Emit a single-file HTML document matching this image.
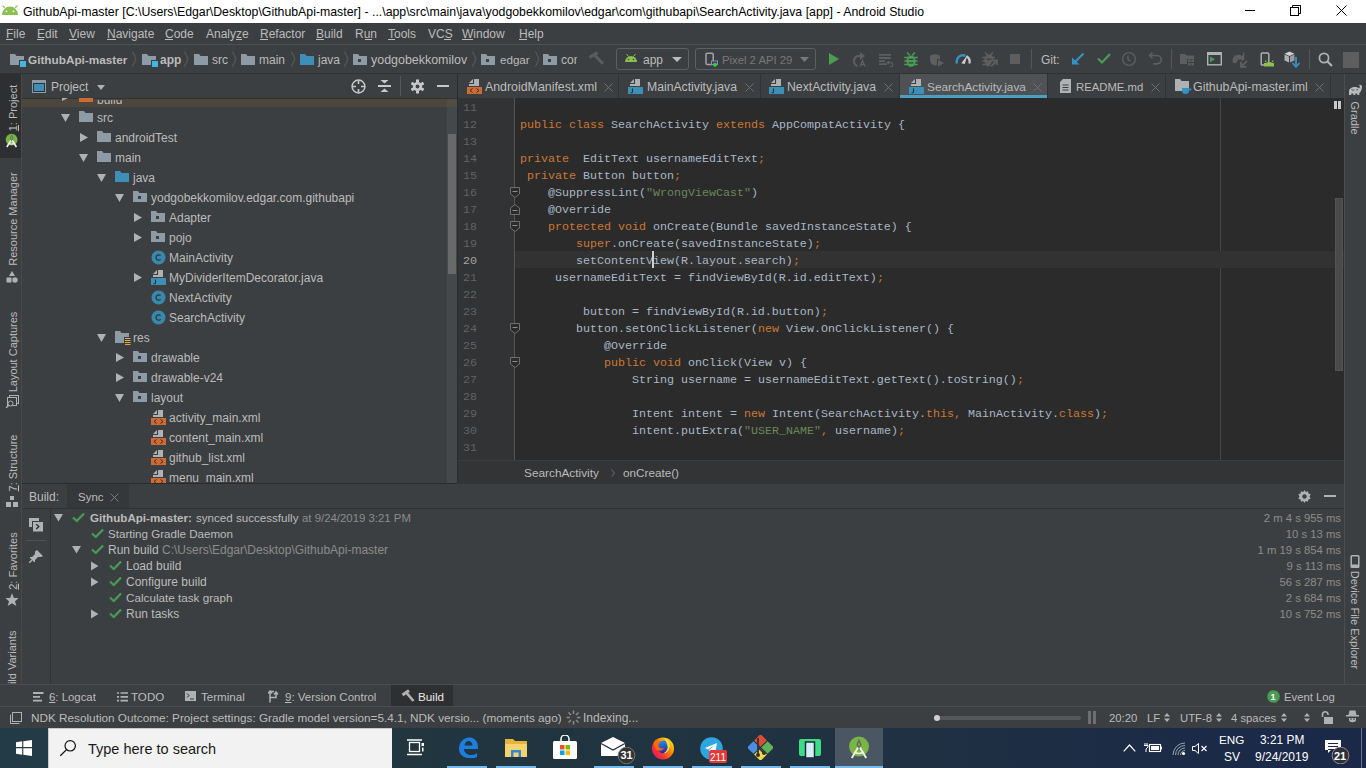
<!DOCTYPE html>
<html><head><meta charset="utf-8"><style>
html,body{margin:0;padding:0;width:1366px;height:768px;overflow:hidden;background:#3c3f41;position:relative;font-family:"Liberation Sans", sans-serif;}
body>div,body>svg{position:absolute;}
.t{white-space:pre;line-height:20px;}
</style></head><body>
<div style="left:0px;top:0px;width:1366px;height:23px;background:#ffffff;"></div>
<svg style="left:2px;top:5px" width="16" height="10" viewBox="0 0 16 10"><path d="M0 10 A8 8.5 0 0 1 16 10 Z" fill="#8cc152"/><line x1="0.6" y1="0.6" x2="2.8" y2="2.8" stroke="#8cc152" stroke-width="1.3"/><line x1="15.4" y1="0.6" x2="13.2" y2="2.8" stroke="#8cc152" stroke-width="1.3"/><circle cx="4.5" cy="6.3" r="0.9" fill="#fff"/><circle cx="11.5" cy="6.3" r="0.9" fill="#fff"/></svg>
<div class="t" style="left:23px;top:2px;font-size:12.32px;color:#000000;">GithubApi-master [C:\Users\Edgar\Desktop\GithubApi-master] - ...\app\src\main\java\yodgobekkomilov\edgar\com\githubapi\SearchActivity.java [app] - Android Studio</div>
<div style="left:1245px;top:10px;width:10px;height:1px;background:#000;"></div>
<svg style="left:1290px;top:5px" width="11" height="11" viewBox="0 0 11 11"><rect x="0.5" y="2.5" width="8" height="8" fill="none" stroke="#000"/><path d="M2.5 2.5 V0.5 H10.5 V8.5 H8.5" fill="none" stroke="#000"/></svg>
<svg style="left:1336px;top:5px" width="11" height="11" viewBox="0 0 11 11"><path d="M0.5 0.5 L10.5 10.5 M10.5 0.5 L0.5 10.5" stroke="#000" stroke-width="1"/></svg>
<div style="left:0px;top:23px;width:1366px;height:21px;background:#3c3f41;"></div>
<div style="left:0px;top:44px;width:1366px;height:1px;background:#515151;"></div>
<div class="t" style="left:6px;top:24px;font-size:12px;color:#bbbbbb;">File</div>
<div class="t" style="left:37px;top:24px;font-size:12px;color:#bbbbbb;">Edit</div>
<div class="t" style="left:69px;top:24px;font-size:12px;color:#bbbbbb;">View</div>
<div class="t" style="left:107px;top:24px;font-size:12px;color:#bbbbbb;">Navigate</div>
<div class="t" style="left:165px;top:24px;font-size:12px;color:#bbbbbb;">Code</div>
<div class="t" style="left:206px;top:24px;font-size:12px;color:#bbbbbb;">Analyze</div>
<div class="t" style="left:260px;top:24px;font-size:12px;color:#bbbbbb;">Refactor</div>
<div class="t" style="left:316px;top:24px;font-size:12px;color:#bbbbbb;">Build</div>
<div class="t" style="left:355px;top:24px;font-size:12px;color:#bbbbbb;">Run</div>
<div class="t" style="left:388px;top:24px;font-size:12px;color:#bbbbbb;">Tools</div>
<div class="t" style="left:428px;top:24px;font-size:12px;color:#bbbbbb;">VCS</div>
<div class="t" style="left:462px;top:24px;font-size:12px;color:#bbbbbb;">Window</div>
<div class="t" style="left:519px;top:24px;font-size:12px;color:#bbbbbb;">Help</div>
<div style="left:6px;top:39px;width:7px;height:1px;background:#bbbbbb;"></div>
<div style="left:37px;top:39px;width:7px;height:1px;background:#bbbbbb;"></div>
<div style="left:69px;top:39px;width:8px;height:1px;background:#bbbbbb;"></div>
<div style="left:107px;top:39px;width:9px;height:1px;background:#bbbbbb;"></div>
<div style="left:165px;top:39px;width:8px;height:1px;background:#bbbbbb;"></div>
<div style="left:236px;top:39px;width:6px;height:1px;background:#bbbbbb;"></div>
<div style="left:260px;top:39px;width:8px;height:1px;background:#bbbbbb;"></div>
<div style="left:316px;top:39px;width:8px;height:1px;background:#bbbbbb;"></div>
<div style="left:365px;top:39px;width:7px;height:1px;background:#bbbbbb;"></div>
<div style="left:388px;top:39px;width:7px;height:1px;background:#bbbbbb;"></div>
<div style="left:444px;top:39px;width:7px;height:1px;background:#bbbbbb;"></div>
<div style="left:462px;top:39px;width:11px;height:1px;background:#bbbbbb;"></div>
<div style="left:519px;top:39px;width:8px;height:1px;background:#bbbbbb;"></div>
<div style="left:0px;top:45px;width:1366px;height:28px;background:#3c3f41;"></div>
<div style="left:0px;top:73px;width:1366px;height:1px;background:#323232;"></div>
<svg style="left:10px;top:54px" width="17" height="15" viewBox="0 0 17 15"><path d="M0 0 H5 L6.5 2 H14 V6 H9 V11 H0 Z" fill="#8f9ba4"/><rect x="10" y="7" width="6" height="6" fill="#40b6e0"/></svg>
<div class="t" style="left:28px;top:50px;font-size:11.78px;color:#bbbbbb;font-weight:bold;">GithubApi-master</div>
<svg style="left:132px;top:51px" width="5" height="16" viewBox="0 0 5 16"><path d="M0.5 0.5 L4 8 L0.5 15.5" fill="none" stroke="#5c5f61" stroke-width="1"/></svg>
<svg style="left:142px;top:54px" width="17" height="15" viewBox="0 0 17 15"><path d="M0 0 H5 L6.5 2 H14 V6 H9 V11 H0 Z" fill="#8f9ba4"/><rect x="10" y="7" width="6" height="6" fill="#40b6e0"/></svg>
<div class="t" style="left:160px;top:50px;font-size:12px;color:#bbbbbb;font-weight:bold;">app</div>
<svg style="left:184px;top:51px" width="5" height="16" viewBox="0 0 5 16"><path d="M0.5 0.5 L4 8 L0.5 15.5" fill="none" stroke="#5c5f61" stroke-width="1"/></svg>
<svg style="left:194px;top:54px" width="14" height="11" viewBox="0 0 14 11"><path d="M0 0 H5 L6.5 2 H14 V11 H0 Z" fill="#8f9ba4"/></svg>
<div class="t" style="left:212px;top:50px;font-size:12px;color:#bbbbbb;">src</div>
<svg style="left:232px;top:51px" width="5" height="16" viewBox="0 0 5 16"><path d="M0.5 0.5 L4 8 L0.5 15.5" fill="none" stroke="#5c5f61" stroke-width="1"/></svg>
<svg style="left:241px;top:54px" width="14" height="11" viewBox="0 0 14 11"><path d="M0 0 H5 L6.5 2 H14 V11 H0 Z" fill="#8f9ba4"/></svg>
<div class="t" style="left:259px;top:50px;font-size:12px;color:#bbbbbb;">main</div>
<svg style="left:291px;top:51px" width="5" height="16" viewBox="0 0 5 16"><path d="M0.5 0.5 L4 8 L0.5 15.5" fill="none" stroke="#5c5f61" stroke-width="1"/></svg>
<svg style="left:300px;top:54px" width="14" height="11" viewBox="0 0 14 11"><path d="M0 0 H5 L6.5 2 H14 V11 H0 Z" fill="#3d8fb7"/></svg>
<div class="t" style="left:318px;top:50px;font-size:12px;color:#bbbbbb;">java</div>
<svg style="left:344px;top:51px" width="5" height="16" viewBox="0 0 5 16"><path d="M0.5 0.5 L4 8 L0.5 15.5" fill="none" stroke="#5c5f61" stroke-width="1"/></svg>
<svg style="left:353px;top:54px" width="14" height="11" viewBox="0 0 14 11"><path d="M0 0 H5 L6.5 2 H14 V11 H0 Z" fill="#8f9ba4"/><rect x="5" y="5" width="3" height="3" fill="#3c3f41"/></svg>
<div class="t" style="left:371px;top:50px;font-size:12.45px;color:#bbbbbb;">yodgobekkomilov</div>
<svg style="left:472px;top:51px" width="5" height="16" viewBox="0 0 5 16"><path d="M0.5 0.5 L4 8 L0.5 15.5" fill="none" stroke="#5c5f61" stroke-width="1"/></svg>
<svg style="left:481px;top:54px" width="14" height="11" viewBox="0 0 14 11"><path d="M0 0 H5 L6.5 2 H14 V11 H0 Z" fill="#8f9ba4"/><rect x="5" y="5" width="3" height="3" fill="#3c3f41"/></svg>
<div class="t" style="left:500px;top:50px;font-size:11.6px;color:#bbbbbb;">edgar</div>
<svg style="left:535px;top:51px" width="5" height="16" viewBox="0 0 5 16"><path d="M0.5 0.5 L4 8 L0.5 15.5" fill="none" stroke="#5c5f61" stroke-width="1"/></svg>
<svg style="left:543px;top:54px" width="14" height="11" viewBox="0 0 14 11"><path d="M0 0 H5 L6.5 2 H14 V11 H0 Z" fill="#8f9ba4"/><rect x="5" y="5" width="3" height="3" fill="#3c3f41"/></svg>
<div style="left:561px;top:50px;width:16px;height:20px;overflow:hidden"><div class="t" style="position:absolute;left:0;top:0;font-size:12px;color:#bbbbbb">com</div></div>
<svg style="left:586px;top:50px" width="20" height="18" viewBox="0 0 20 18"><path d="M3.5 7.5 L11.5 2.5" stroke="#5c5c5c" stroke-width="3.2"/><path d="M8.5 5 L17 13.8" stroke="#5c5c5c" stroke-width="3"/></svg>
<div style="left:616px;top:48px;width:73px;height:22px;background:none;border:1px solid #5e6060;border-radius:3px;box-sizing:border-box;background:transparent"></div>
<svg style="left:624px;top:53px" width="14" height="10" viewBox="0 0 14 10"><path d="M1 9 A6 6 0 0 1 13 9 Z" fill="#8cc152"/><line x1="2.5" y1="1" x2="4.5" y2="3.5" stroke="#8cc152"/><line x1="11.5" y1="1" x2="9.5" y2="3.5" stroke="#8cc152"/><circle cx="4.5" cy="6.5" r="0.8" fill="#3c3f41"/><circle cx="9.5" cy="6.5" r="0.8" fill="#3c3f41"/></svg>
<div class="t" style="left:643px;top:50px;font-size:12px;color:#bbbbbb;">app</div>
<svg style="left:672px;top:57px" width="10" height="6" viewBox="0 0 10 6"><path d="M0 0 H10 L5 5 Z" fill="#bbbbbb"/></svg>
<div style="left:695px;top:48px;width:121px;height:22px;background:none;border:1px solid #5e6060;border-radius:3px;box-sizing:border-box;background:transparent"></div>
<svg style="left:705px;top:52px" width="15" height="16" viewBox="0 0 15 16"><rect x="1" y="1.2" width="7.2" height="11.3" rx="1.2" fill="none" stroke="#9fa3a6" stroke-width="1.5"/><rect x="6.5" y="9" width="6" height="3.5" fill="#3c3f41" stroke="#a07ae0" stroke-width="1"/><circle cx="10" cy="12.8" r="2" fill="#22dd22"/></svg>
<div class="t" style="left:722px;top:50px;font-size:11.3px;color:#787878;">Pixel 2 API 29</div>
<svg style="left:800px;top:57px" width="9" height="6" viewBox="0 0 9 6"><path d="M0 0 H9 L4.5 5 Z" fill="#787878"/></svg>
<svg style="left:829px;top:53px" width="10" height="12" viewBox="0 0 10 12"><path d="M0 0 L10 6 L0 12 Z" fill="#4a9d55"/></svg>
<svg style="left:850px;top:51px" width="17" height="17" viewBox="0 0 17 17"><path d="M7.5 15 A5.3 5.3 0 0 1 7.5 5 H10.5" fill="none" stroke="#5e5e5e" stroke-width="2"/><path d="M10 1 L15 5 L10 9 Z" fill="#5e5e5e"/><path d="M10 15.5 L12.5 9.5 L15 15.5 M11 13.5 H14" fill="none" stroke="#5e5e5e" stroke-width="1.3"/></svg>
<svg style="left:879px;top:53px" width="15" height="14" viewBox="0 0 15 14"><path d="M0 1.8 H12 M0 5 H12 M0 8.2 H6 M0 11.2 H8" stroke="#5e5e5e" stroke-width="1.8"/><path d="M9 9.5 H11.5 A2.2 2.2 0 0 1 11.5 13.9 H10.5" fill="none" stroke="#5e5e5e" stroke-width="1.1"/><path d="M10 8 L8.3 9.5 L10 11" fill="none" stroke="#5e5e5e" stroke-width="1.1"/></svg>
<svg style="left:904px;top:52px" width="14" height="15" viewBox="0 0 14 15"><g ><path d="M3.2 0.5 L5.8 3.5 M10.8 0.5 L8.2 3.5" stroke="#4a9d55" stroke-width="1.5"/><ellipse cx="7" cy="9.2" rx="4.6" ry="5.6" fill="#4a9d55"/><path d="M0.3 5.5 H13.7 M0.3 9 H13.7 M0.3 12.5 H13.7" stroke="#4a9d55" stroke-width="1.7"/><path d="M4.6 7.3 H9.4 M4.6 10.8 H9.4" stroke="#3c3f41" stroke-width="1.3"/></g></svg>
<svg style="left:930px;top:54px" width="16" height="14" viewBox="0 0 16 14"><path d="M0 1.5 L5 0 L10 1.5 V6 C10 9.5 7 11 5 11.5 C3 11 0 9.5 0 6 Z" fill="#5e5e5e"/><path d="M7.5 5 L15 9 L7.5 13.5 Z" fill="#5e5e5e" stroke="#3c3f41" stroke-width="1"/></svg>
<svg style="left:955px;top:53px" width="16" height="11" viewBox="0 0 16 11"><path d="M2 10.5 A6.3 6.3 0 0 1 10.5 2.8" fill="none" stroke="#3592c4" stroke-width="2.4"/><path d="M11.5 3.2 A6.3 6.3 0 0 1 14.3 10.5" fill="none" stroke="#c8c8c8" stroke-width="2.2"/><path d="M6.3 10.3 L12.3 2.2 L9.8 11 Z" fill="#d0d0d0"/></svg>
<svg style="left:982px;top:52px" width="16" height="15" viewBox="0 0 16 15"><path d="M3.2 0.5 L5.8 3.5 M10.8 0.5 L8.2 3.5" stroke="#5e5e5e" stroke-width="1.5"/><path d="M2.4 9.2 A4.6 5.6 0 0 1 11.6 7 L7 14.5 A4.6 5.6 0 0 1 2.4 9.2 Z" fill="#5e5e5e"/><path d="M0.3 5.5 H13 M0.3 9 H8 M0.3 12.5 H5" stroke="#5e5e5e" stroke-width="1.7"/><path d="M4.6 7.3 H9.4" stroke="#3c3f41" stroke-width="1.3"/><path d="M9 14.5 L14.5 9" stroke="#5e5e5e" stroke-width="1.8"/><path d="M10.5 8.5 H15 V13" fill="none" stroke="#5e5e5e" stroke-width="1.8"/></svg>
<div style="left:1010px;top:54px;width:10px;height:10px;background:#5e5e5e;"></div>
<div style="left:1031px;top:49px;width:1px;height:20px;background:#555555;"></div>
<div class="t" style="left:1041px;top:50px;font-size:12px;color:#bbbbbb;">Git:</div>
<svg style="left:1070px;top:52px" width="15" height="14" viewBox="0 0 15 14"><path d="M13.5 1.5 L5 10" stroke="#3592c4" stroke-width="2.2"/><path d="M2 5.5 V12.5 H9.5 Z" fill="#3592c4"/></svg>
<svg style="left:1097px;top:52px" width="14" height="13" viewBox="0 0 14 13"><path d="M1 6.5 L5 10.5 L13 2" fill="none" stroke="#499c54" stroke-width="2.2"/></svg>
<svg style="left:1121px;top:51px" width="16" height="16" viewBox="0 0 16 16"><circle cx="8" cy="8" r="6.4" fill="none" stroke="#5e5e5e" stroke-width="1.4"/><path d="M7 4.5 V8.5 L9.5 10" fill="none" stroke="#5e5e5e" stroke-width="1.4"/></svg>
<svg style="left:1148px;top:51px" width="15" height="15" viewBox="0 0 15 15"><path d="M4.5 1.5 L1.5 4.5 L4.5 7.5" fill="none" stroke="#5e5e5e" stroke-width="1.5"/><path d="M1.8 4.5 H9 A4.2 4.2 0 0 1 9 12.9 H5" fill="none" stroke="#5e5e5e" stroke-width="1.6"/></svg>
<div style="left:1171px;top:49px;width:1px;height:20px;background:#555555;"></div>
<svg style="left:1180px;top:53px" width="16" height="14" viewBox="0 0 16 14"><path d="M0 1 H5 L6.5 2.5 H14 V6 H7 V11 H0 Z" fill="#5e5e5e"/><rect x="8" y="6.5" width="2.6" height="2.6" fill="#5e5e5e"/><rect x="11.4" y="6.5" width="2.6" height="2.6" fill="#5e5e5e"/><rect x="8" y="10" width="2.6" height="2.6" fill="#5e5e5e"/><rect x="11.4" y="10" width="2.6" height="2.6" fill="#5e5e5e"/></svg>
<svg style="left:1207px;top:52px" width="15" height="14" viewBox="0 0 15 14"><rect x="0.7" y="0.7" width="13.6" height="12.1" fill="none" stroke="#afb1b3" stroke-width="1.4"/><rect x="0.7" y="0.7" width="13.6" height="2.3" fill="#afb1b3"/><path d="M3 4.5 L8 7.3 L3 10.2 Z" fill="#499c54"/></svg>
<svg style="left:1232px;top:51px" width="17" height="17" viewBox="0 0 17 17"><path d="M1 12 C0 8 1 5 4.5 4 C7 3.3 9 4 10 5 C11 4 11.5 2.5 11 1 C12.5 1.5 13 3.5 12 5.5 C13 7 12.5 9 11 10 L9 8.5 H6 L4.5 12 Z" fill="#5e5e5e"/><path d="M9.5 15.5 L15 10" stroke="#5e5e5e" stroke-width="1.8"/><path d="M9 10.5 V15.8 H14.5" fill="none" stroke="#5e5e5e" stroke-width="1.8"/></svg>
<svg style="left:1260px;top:52px" width="15" height="15" viewBox="0 0 15 15"><rect x="1.2" y="1" width="7.6" height="12" rx="1" fill="none" stroke="#afb1b3" stroke-width="1.4"/><path d="M4.5 14.5 A4.8 4.8 0 0 1 14 14.5 Z" fill="#8cc152" transform="translate(0,-0.5)"/><path d="M5.2 8.6 L6.3 9.8 M13.3 8.6 L12.2 9.8" stroke="#8cc152" stroke-width="1.2"/><rect x="4" y="11" width="10" height="3.5" fill="#8cc152"/></svg>
<svg style="left:1284px;top:51px" width="17" height="17" viewBox="0 0 17 17"><path d="M5.5 0.5 L10.5 2.8 L5.5 5 L0.5 2.8 Z" fill="#d0d0d0"/><path d="M0.5 3.5 L5 5.5 V11.5 L0.5 9.5 Z" fill="#afb1b3"/><path d="M6 5.5 L10.5 3.5 V9.5 L6 11.5 Z" fill="#9a9c9e"/><path d="M12 6 V15" stroke="#3592c4" stroke-width="1.8"/><path d="M8.5 12 L12 15.8 L15.5 12" fill="none" stroke="#3592c4" stroke-width="1.8"/></svg>
<div style="left:1309px;top:49px;width:1px;height:20px;background:#555555;"></div>
<svg style="left:1318px;top:52px" width="15" height="15" viewBox="0 0 15 15"><circle cx="6" cy="6" r="4.6" fill="none" stroke="#afb1b3" stroke-width="1.8"/><path d="M9.5 9.5 L14 14" stroke="#afb1b3" stroke-width="2.2"/></svg>
<div style="left:1343px;top:52px;width:16px;height:16px;background:#5e5e5e;"></div>
<div style="left:0px;top:74px;width:21px;height:612px;background:#3c3f41;"></div>
<div style="left:0px;top:74px;width:21px;height:84px;background:#2d2f30;"></div>
<div style="left:21px;top:74px;width:1px;height:612px;background:#47494b;"></div>
<div class="t" style="left:-87.5px;top:97.8px;width:200px;text-align:center;font-size:11px;color:#bbbbbb;transform:rotate(-90deg)"><u>1</u>: Project</div>
<svg style="left:4px;top:132px" width="16" height="16" viewBox="0 0 16 16"><circle cx="7.6" cy="7.7" r="5.9" fill="#78b543"/><path d="M7.6 3 L8.9 6.3 L7.6 8.8 L6.3 6.3 Z" fill="none" stroke="#6a6a6a" stroke-width="1"/><path d="M6.9 8.5 L2.8 15 M8.3 8.5 L12.4 15" stroke="#f0f0f0" stroke-width="1.6"/><path d="M4.8 11.2 Q7.6 12.8 10.4 11.2" fill="none" stroke="#f0f0f0" stroke-width="1.1"/></svg>
<div class="t" style="left:-87.5px;top:208.8px;width:200px;text-align:center;font-size:11px;color:#bbbbbb;transform:rotate(-90deg)">Resource Manager</div>
<svg style="left:6px;top:271px" width="12" height="12" viewBox="0 0 12 12"><path d="M6 0 L9 5 H3 Z" fill="#afb1b3"/><rect x="0.5" y="6.5" width="5" height="5" fill="#afb1b3"/><circle cx="9" cy="9" r="2.7" fill="#afb1b3"/></svg>
<div class="t" style="left:-87.5px;top:342.29999999999995px;width:200px;text-align:center;font-size:11px;color:#bbbbbb;transform:rotate(-90deg)">Layout Captures</div>
<svg style="left:5px;top:395px" width="14" height="13" viewBox="0 0 14 13"><rect x="4.5" y="0.5" width="9" height="8" fill="none" stroke="#afb1b3"/><rect x="2.5" y="2.5" width="9" height="8" fill="#3c3f41" stroke="#afb1b3"/><circle cx="5.5" cy="8.5" r="2.5" fill="#3c3f41" stroke="#afb1b3"/><path d="M3.5 10.5 L1 13" stroke="#afb1b3" stroke-width="1.3"/></svg>
<div class="t" style="left:-87.5px;top:453.3px;width:200px;text-align:center;font-size:11px;color:#bbbbbb;transform:rotate(-90deg)"><u>7</u>: Structure</div>
<svg style="left:6px;top:496px" width="12" height="11" viewBox="0 0 12 11"><rect x="4" y="0" width="4" height="4" fill="#afb1b3"/><rect x="0" y="6" width="5" height="5" fill="#afb1b3"/><rect x="7" y="6" width="5" height="5" fill="#afb1b3"/></svg>
<div class="t" style="left:-87.5px;top:550.55px;width:200px;text-align:center;font-size:11px;color:#bbbbbb;transform:rotate(-90deg)"><u>2</u>: Favorites</div>
<svg style="left:5px;top:593px" width="14" height="13" viewBox="0 0 14 13"><path d="M7 0.3 L8.9 4.9 L13.7 5.1 L10 8.2 L11.3 12.9 L7 10.2 L2.7 12.9 L4 8.2 L0.3 5.1 L5.1 4.9 Z" fill="#afb1b3"/></svg>
<div style="left:0;top:600px;width:21px;height:84px;overflow:hidden"><div class="t" style="position:absolute;left:-88px;top:54px;width:200px;text-align:center;font-size:11px;color:#bbbbbb;transform:rotate(-90deg)">Build Variants</div></div>
<div style="left:1345px;top:74px;width:21px;height:612px;background:#3c3f41;"></div>
<div style="left:1344px;top:74px;width:1px;height:612px;background:#4b4d4f;"></div>
<svg style="left:1348px;top:84px" width="15" height="12" viewBox="0 0 15 12"><path d="M1 11 V7.5 C1 4.5 3.5 3 7 3 C9 3 10 3.5 10.8 4.5 C11.6 3.8 12.2 2.8 11.8 2 C11.4 1.4 10.8 1.4 10.5 1.8 C11 0.3 14 0.3 14 3 C14 5.5 12.8 7.8 11.3 9 V11 H9.3 V9.5 H7.3 V11 H5.3 V9.5 H3.3 V11 Z" fill="#b8babc"/><circle cx="9.2" cy="5.8" r="0.7" fill="#3c3f41"/><path d="M3.5 5.5 Q5 7 6.5 5.8" fill="none" stroke="#3c3f41" stroke-width="0.8"/></svg>
<div class="t" style="left:1254.5px;top:108.19999999999999px;width:200px;text-align:center;font-size:11px;color:#bbbbbb;transform:rotate(90deg)">Gradle</div>
<svg style="left:1350px;top:555px" width="10" height="13" viewBox="0 0 10 13"><rect x="1.2" y="0.8" width="7.6" height="11.4" rx="0.8" fill="none" stroke="#afb1b3" stroke-width="1.5"/><rect x="1" y="9.5" width="8" height="2.5" fill="#afb1b3"/></svg>
<div class="t" style="left:1254.5px;top:609.7px;width:200px;text-align:center;font-size:11px;color:#bbbbbb;transform:rotate(90deg)">Device File Explorer</div>
<div style="left:22px;top:74px;width:435px;height:24px;background:#3c3f41;"></div>
<div style="left:22px;top:98px;width:435px;height:1px;background:#323232;"></div>
<svg style="left:32px;top:80px" width="14" height="13" viewBox="0 0 14 13"><rect x="0" y="0" width="14" height="13" fill="#8f9ba4"/><rect x="1" y="3" width="12" height="9" fill="#2f3133"/><rect x="2" y="4" width="10" height="7" fill="#3d8fb7"/></svg>
<div class="t" style="left:51px;top:77px;font-size:12px;color:#bbbbbb;">Project</div>
<svg style="left:97px;top:85px" width="8" height="5" viewBox="0 0 8 5"><path d="M0 0 H8 L4 5 Z" fill="#afb1b3"/></svg>
<svg style="left:351px;top:79px" width="15" height="15" viewBox="0 0 15 15"><circle cx="7.5" cy="7.5" r="6.4" fill="none" stroke="#c8c8c8" stroke-width="1.5"/><path d="M7.5 1.5 V5 M7.5 10 V13.5 M1.5 7.5 H5 M10 7.5 H13.5" stroke="#c8c8c8" stroke-width="1.6"/></svg>
<svg style="left:378px;top:79px" width="13" height="14" viewBox="0 0 13 14"><path d="M2.5 1 H10.5 L6.5 4.5 Z M2.5 13 H10.5 L6.5 9.5 Z" fill="#c8c8c8"/><rect x="0" y="6" width="13" height="2" fill="#c8c8c8"/></svg>
<div style="left:400px;top:76px;width:1px;height:20px;background:#555759;"></div>
<svg style="left:411px;top:79px" width="13" height="15" viewBox="0 0 13 15"><g fill="#c8c8c8"><circle cx="6.5" cy="7.5" r="4.6"/><rect x="5" y="0.5" width="3" height="3"/><rect x="5" y="11.5" width="3" height="3"/><rect x="5" y="0.5" width="3" height="3" transform="rotate(60 6.5 7.5)"/><rect x="5" y="11.5" width="3" height="3" transform="rotate(60 6.5 7.5)"/><rect x="5" y="0.5" width="3" height="3" transform="rotate(-60 6.5 7.5)"/><rect x="5" y="11.5" width="3" height="3" transform="rotate(-60 6.5 7.5)"/></g><circle cx="6.5" cy="7.5" r="1.9" fill="#3c3f41"/></svg>
<div style="left:437px;top:85px;width:12px;height:2px;background:#c8c8c8;"></div>
<div style="left:22px;top:99px;width:435px;height:384px;background:#3c3f41;"></div>
<div style="left:22px;top:99px;width:435px;height:8px;background:#4b473c;"></div>
<svg style="left:79px;top:98px" width="15" height="5" viewBox="0 0 15 5"><rect x="0" y="0" width="14" height="4" fill="#cc6b34"/></svg>
<div class="t" style="left:97px;top:90px;font-size:12px;color:#bbbbbb;clip-path:inset(10px 0 0 0)">build</div>
<svg style="left:62px;top:98px" width="8" height="4" viewBox="0 0 8 4"><path d="M0 0 L6 0 L0 3 Z" fill="#afb1b3"/></svg>
<div style="left:447px;top:107px;width:10px;height:376px;background:#45484a;"></div>
<div style="left:447px;top:99px;width:10px;height:8px;background:#524d44;"></div>
<div style="left:448px;top:134px;width:8px;height:140px;background:#67696a;"></div>
<svg style="left:61px;top:114px" width="9" height="8" viewBox="0 0 9 8"><path d="M0 0 H9 L4.5 8 Z" fill="#afb1b3"/></svg>
<svg style="left:79px;top:111px" width="14" height="11" viewBox="0 0 14 11"><path d="M0 0 H5 L6.5 2 H14 V11 H0 Z" fill="#8f9ba4"/></svg>
<div class="t" style="left:97px;top:108px;font-size:12px;color:#bbbbbb;">src</div>
<svg style="left:80px;top:133px" width="8" height="9" viewBox="0 0 8 9"><path d="M0 0 L8 4.5 L0 9 Z" fill="#afb1b3"/></svg>
<svg style="left:97px;top:131px" width="14" height="11" viewBox="0 0 14 11"><path d="M0 0 H5 L6.5 2 H14 V11 H0 Z" fill="#8f9ba4"/></svg>
<div class="t" style="left:115px;top:128px;font-size:12px;color:#bbbbbb;">androidTest</div>
<svg style="left:79px;top:154px" width="9" height="8" viewBox="0 0 9 8"><path d="M0 0 H9 L4.5 8 Z" fill="#afb1b3"/></svg>
<svg style="left:97px;top:151px" width="14" height="11" viewBox="0 0 14 11"><path d="M0 0 H5 L6.5 2 H14 V11 H0 Z" fill="#8f9ba4"/></svg>
<div class="t" style="left:115px;top:148px;font-size:12px;color:#bbbbbb;">main</div>
<svg style="left:97px;top:174px" width="9" height="8" viewBox="0 0 9 8"><path d="M0 0 H9 L4.5 8 Z" fill="#afb1b3"/></svg>
<svg style="left:115px;top:171px" width="14" height="11" viewBox="0 0 14 11"><path d="M0 0 H5 L6.5 2 H14 V11 H0 Z" fill="#3d8fb7"/></svg>
<div class="t" style="left:133px;top:168px;font-size:12px;color:#bbbbbb;">java</div>
<svg style="left:115px;top:194px" width="9" height="8" viewBox="0 0 9 8"><path d="M0 0 H9 L4.5 8 Z" fill="#afb1b3"/></svg>
<svg style="left:133px;top:191px" width="14" height="11" viewBox="0 0 14 11"><path d="M0 0 H5 L6.5 2 H14 V11 H0 Z" fill="#8f9ba4"/><rect x="5" y="5" width="3" height="3" fill="#3c3f41"/></svg>
<div class="t" style="left:151px;top:188px;font-size:12px;color:#bbbbbb;">yodgobekkomilov.edgar.com.githubapi</div>
<svg style="left:134px;top:213px" width="8" height="9" viewBox="0 0 8 9"><path d="M0 0 L8 4.5 L0 9 Z" fill="#afb1b3"/></svg>
<svg style="left:151px;top:211px" width="14" height="11" viewBox="0 0 14 11"><path d="M0 0 H5 L6.5 2 H14 V11 H0 Z" fill="#8f9ba4"/><rect x="5" y="5" width="3" height="3" fill="#3c3f41"/></svg>
<div class="t" style="left:169px;top:208px;font-size:12px;color:#bbbbbb;">Adapter</div>
<svg style="left:134px;top:233px" width="8" height="9" viewBox="0 0 8 9"><path d="M0 0 L8 4.5 L0 9 Z" fill="#afb1b3"/></svg>
<svg style="left:151px;top:231px" width="14" height="11" viewBox="0 0 14 11"><path d="M0 0 H5 L6.5 2 H14 V11 H0 Z" fill="#8f9ba4"/><rect x="5" y="5" width="3" height="3" fill="#3c3f41"/></svg>
<div class="t" style="left:169px;top:228px;font-size:12px;color:#bbbbbb;">pojo</div>
<svg style="left:151px;top:250px" width="15" height="15" viewBox="0 0 15 15"><circle cx="7.5" cy="7.5" r="7" fill="#3b87a9"/><path d="M9.6 5.6 A2.7 2.7 0 1 0 9.6 9.4" fill="none" stroke="#223642" stroke-width="1.2"/></svg>
<div class="t" style="left:169px;top:248px;font-size:12px;color:#bbbbbb;">MainActivity</div>
<svg style="left:134px;top:273px" width="8" height="9" viewBox="0 0 8 9"><path d="M0 0 L8 4.5 L0 9 Z" fill="#afb1b3"/></svg>
<svg style="left:151px;top:270px" width="15" height="15" viewBox="0 0 15 15"><path d="M6 0 H12 V7 H2 V4 Z" fill="#afb1b3"/><path d="M6.5 0 V4.5 H2" fill="none" stroke="#3c3f41" stroke-width="1.1"/><rect x="0" y="8" width="15" height="7" fill="#3d8fb7"/><path d="M4.5 9.5 V13 Q4.5 13.8 3.5 13.8 H2.5" stroke="#1f3440" stroke-width="1.1" fill="none"/></svg>
<div class="t" style="left:169px;top:268px;font-size:12px;color:#bbbbbb;">MyDividerItemDecorator.java</div>
<svg style="left:151px;top:290px" width="15" height="15" viewBox="0 0 15 15"><circle cx="7.5" cy="7.5" r="7" fill="#3b87a9"/><path d="M9.6 5.6 A2.7 2.7 0 1 0 9.6 9.4" fill="none" stroke="#223642" stroke-width="1.2"/></svg>
<div class="t" style="left:169px;top:288px;font-size:12px;color:#bbbbbb;">NextActivity</div>
<svg style="left:151px;top:310px" width="15" height="15" viewBox="0 0 15 15"><circle cx="7.5" cy="7.5" r="7" fill="#3b87a9"/><path d="M9.6 5.6 A2.7 2.7 0 1 0 9.6 9.4" fill="none" stroke="#223642" stroke-width="1.2"/></svg>
<div class="t" style="left:169px;top:308px;font-size:12px;color:#bbbbbb;">SearchActivity</div>
<svg style="left:97px;top:334px" width="9" height="8" viewBox="0 0 9 8"><path d="M0 0 H9 L4.5 8 Z" fill="#afb1b3"/></svg>
<svg style="left:115px;top:330px" width="16" height="15" viewBox="0 0 16 15"><path d="M0 1 H5 L6.5 3 H14 V7 H9 V13 H0 Z" fill="#8f9ba4"/><path d="M10 8.5 H15.5 M10 10.5 H15.5 M10 12.5 H15.5 M10 14.5 H15.5" stroke="#e0a83a" stroke-width="1"/></svg>
<div class="t" style="left:133px;top:328px;font-size:12px;color:#bbbbbb;">res</div>
<svg style="left:116px;top:353px" width="8" height="9" viewBox="0 0 8 9"><path d="M0 0 L8 4.5 L0 9 Z" fill="#afb1b3"/></svg>
<svg style="left:133px;top:351px" width="14" height="11" viewBox="0 0 14 11"><path d="M0 0 H5 L6.5 2 H14 V11 H0 Z" fill="#8f9ba4"/><rect x="5" y="5" width="3" height="3" fill="#3c3f41"/></svg>
<div class="t" style="left:151px;top:348px;font-size:12px;color:#bbbbbb;">drawable</div>
<svg style="left:116px;top:373px" width="8" height="9" viewBox="0 0 8 9"><path d="M0 0 L8 4.5 L0 9 Z" fill="#afb1b3"/></svg>
<svg style="left:133px;top:371px" width="14" height="11" viewBox="0 0 14 11"><path d="M0 0 H5 L6.5 2 H14 V11 H0 Z" fill="#8f9ba4"/><rect x="5" y="5" width="3" height="3" fill="#3c3f41"/></svg>
<div class="t" style="left:151px;top:368px;font-size:12px;color:#bbbbbb;">drawable-v24</div>
<svg style="left:115px;top:394px" width="9" height="8" viewBox="0 0 9 8"><path d="M0 0 H9 L4.5 8 Z" fill="#afb1b3"/></svg>
<svg style="left:133px;top:391px" width="14" height="11" viewBox="0 0 14 11"><path d="M0 0 H5 L6.5 2 H14 V11 H0 Z" fill="#8f9ba4"/><rect x="5" y="5" width="3" height="3" fill="#3c3f41"/></svg>
<div class="t" style="left:151px;top:388px;font-size:12px;color:#bbbbbb;">layout</div>
<svg style="left:151px;top:410px" width="15" height="15" viewBox="0 0 15 15"><path d="M6 0 H12 V7 H2 V4 Z" fill="#afb1b3"/><path d="M6.5 0 V4.5 H2" fill="none" stroke="#3c3f41" stroke-width="1.1"/><rect x="0" y="8" width="15" height="7" fill="#cc6b34"/><path d="M5.5 9.5 L3 11.5 L5.5 13.5 M9.5 9.5 L12 11.5 L9.5 13.5" fill="none" stroke="#3c2a20" stroke-width="1"/></svg>
<div class="t" style="left:169px;top:408px;font-size:12px;color:#bbbbbb;">activity_main.xml</div>
<svg style="left:151px;top:430px" width="15" height="15" viewBox="0 0 15 15"><path d="M6 0 H12 V7 H2 V4 Z" fill="#afb1b3"/><path d="M6.5 0 V4.5 H2" fill="none" stroke="#3c3f41" stroke-width="1.1"/><rect x="0" y="8" width="15" height="7" fill="#cc6b34"/><path d="M5.5 9.5 L3 11.5 L5.5 13.5 M9.5 9.5 L12 11.5 L9.5 13.5" fill="none" stroke="#3c2a20" stroke-width="1"/></svg>
<div class="t" style="left:169px;top:428px;font-size:12px;color:#bbbbbb;">content_main.xml</div>
<svg style="left:151px;top:450px" width="15" height="15" viewBox="0 0 15 15"><path d="M6 0 H12 V7 H2 V4 Z" fill="#afb1b3"/><path d="M6.5 0 V4.5 H2" fill="none" stroke="#3c3f41" stroke-width="1.1"/><rect x="0" y="8" width="15" height="7" fill="#cc6b34"/><path d="M5.5 9.5 L3 11.5 L5.5 13.5 M9.5 9.5 L12 11.5 L9.5 13.5" fill="none" stroke="#3c2a20" stroke-width="1"/></svg>
<div class="t" style="left:169px;top:448px;font-size:12px;color:#bbbbbb;">github_list.xml</div>
<svg style="left:151px;top:470px" width="15" height="15" viewBox="0 0 15 15"><path d="M6 0 H12 V7 H2 V4 Z" fill="#afb1b3"/><path d="M6.5 0 V4.5 H2" fill="none" stroke="#3c3f41" stroke-width="1.1"/><rect x="0" y="8" width="15" height="7" fill="#cc6b34"/><path d="M5.5 9.5 L3 11.5 L5.5 13.5 M9.5 9.5 L12 11.5 L9.5 13.5" fill="none" stroke="#3c2a20" stroke-width="1"/></svg>
<div class="t" style="left:169px;top:468px;font-size:12px;color:#bbbbbb;">menu_main.xml</div>
<div style="left:22px;top:483px;width:435px;height:1px;background:#2b2b2b;"></div>
<div style="left:457px;top:74px;width:1px;height:409px;background:#2b2b2b;"></div>
<div style="left:458px;top:74px;width:886px;height:24px;background:#3c3f41;"></div>
<div style="left:458px;top:98px;width:886px;height:1px;background:#323232;"></div>
<div style="left:900px;top:74px;width:148px;height:24px;background:#4e5254;"></div>
<div style="left:900px;top:95px;width:148px;height:3px;background:#4a9fc2;"></div>
<svg style="left:467px;top:79px" width="15" height="15" viewBox="0 0 15 15"><path d="M6 0 H12 V7 H2 V4 Z" fill="#afb1b3"/><path d="M6.5 0 V4.5 H2" fill="none" stroke="#3c3f41" stroke-width="1.1"/><rect x="0" y="8" width="15" height="7" fill="#cc6b34"/><path d="M5.5 9.5 L3 11.5 L5.5 13.5 M9.5 9.5 L12 11.5 L9.5 13.5" fill="none" stroke="#3c2a20" stroke-width="1"/></svg>
<div class="t" style="left:485px;top:77px;font-size:12.36px;color:#bbbbbb;">AndroidManifest.xml</div>
<svg style="left:604px;top:83px" width="9" height="9" viewBox="0 0 9 9"><path d="M0.5 0.5 L8.5 8.5 M8.5 0.5 L0.5 8.5" stroke="#6e6e6e" stroke-width="1"/></svg>
<div style="left:618px;top:74px;width:1px;height:24px;background:#323232;"></div>
<svg style="left:628px;top:79px" width="15" height="15" viewBox="0 0 15 15"><path d="M6 0 H12 V7 H2 V4 Z" fill="#afb1b3"/><path d="M6.5 0 V4.5 H2" fill="none" stroke="#3c3f41" stroke-width="1.1"/><rect x="0" y="8" width="15" height="7" fill="#3d8fb7"/><path d="M4.5 9.5 V13 Q4.5 13.8 3.5 13.8 H2.5" stroke="#1f3440" stroke-width="1.1" fill="none"/></svg>
<div class="t" style="left:647px;top:77px;font-size:12.21px;color:#bbbbbb;">MainActivity.java</div>
<svg style="left:745px;top:83px" width="9" height="9" viewBox="0 0 9 9"><path d="M0.5 0.5 L8.5 8.5 M8.5 0.5 L0.5 8.5" stroke="#6e6e6e" stroke-width="1"/></svg>
<div style="left:760px;top:74px;width:1px;height:24px;background:#323232;"></div>
<svg style="left:769px;top:79px" width="15" height="15" viewBox="0 0 15 15"><path d="M6 0 H12 V7 H2 V4 Z" fill="#afb1b3"/><path d="M6.5 0 V4.5 H2" fill="none" stroke="#3c3f41" stroke-width="1.1"/><rect x="0" y="8" width="15" height="7" fill="#3d8fb7"/><path d="M4.5 9.5 V13 Q4.5 13.8 3.5 13.8 H2.5" stroke="#1f3440" stroke-width="1.1" fill="none"/></svg>
<div class="t" style="left:787px;top:77px;font-size:12.26px;color:#bbbbbb;">NextActivity.java</div>
<svg style="left:884px;top:83px" width="9" height="9" viewBox="0 0 9 9"><path d="M0.5 0.5 L8.5 8.5 M8.5 0.5 L0.5 8.5" stroke="#6e6e6e" stroke-width="1"/></svg>
<div style="left:899px;top:74px;width:1px;height:24px;background:#323232;"></div>
<svg style="left:909px;top:79px" width="15" height="15" viewBox="0 0 15 15"><path d="M6 0 H12 V7 H2 V4 Z" fill="#afb1b3"/><path d="M6.5 0 V4.5 H2" fill="none" stroke="#3c3f41" stroke-width="1.1"/><rect x="0" y="8" width="15" height="7" fill="#3d8fb7"/><path d="M4.5 9.5 V13 Q4.5 13.8 3.5 13.8 H2.5" stroke="#1f3440" stroke-width="1.1" fill="none"/></svg>
<div class="t" style="left:927px;top:77px;font-size:11.82px;color:#bbbbbb;">SearchActivity.java</div>
<svg style="left:1033px;top:83px" width="9" height="9" viewBox="0 0 9 9"><path d="M0.5 0.5 L8.5 8.5 M8.5 0.5 L0.5 8.5" stroke="#6e6e6e" stroke-width="1"/></svg>
<div style="left:1047px;top:74px;width:1px;height:24px;background:#323232;"></div>
<svg style="left:1060px;top:79px" width="11" height="14" viewBox="0 0 11 14"><path d="M3 0 H11 V14 H0 V3 Z" fill="#afb1b3"/><path d="M2.5 6 H8.5 M2.5 8.5 H8.5 M2.5 11 H8.5" stroke="#3c3f41"/></svg>
<div class="t" style="left:1076px;top:77px;font-size:11.3px;color:#bbbbbb;">README.md</div>
<svg style="left:1151px;top:83px" width="9" height="9" viewBox="0 0 9 9"><path d="M0.5 0.5 L8.5 8.5 M8.5 0.5 L0.5 8.5" stroke="#6e6e6e" stroke-width="1"/></svg>
<div style="left:1165px;top:74px;width:1px;height:24px;background:#323232;"></div>
<svg style="left:1175px;top:79px" width="17" height="15" viewBox="0 0 17 15"><path d="M0 0 H5 L6.5 2 H14 V12 H0 Z" fill="#afb1b3"/><path d="M7 9 H14 V12 A3.5 3 0 0 1 7 12 Z" fill="#3592c4"/><path d="M14 10 H16 V11 H14" stroke="#3592c4" fill="none"/></svg>
<div class="t" style="left:1193px;top:77px;font-size:12.39px;color:#bbbbbb;">GithubApi-master.iml</div>
<svg style="left:1315px;top:83px" width="9" height="9" viewBox="0 0 9 9"><path d="M0.5 0.5 L8.5 8.5 M8.5 0.5 L0.5 8.5" stroke="#6e6e6e" stroke-width="1"/></svg>
<div style="left:1330px;top:74px;width:1px;height:24px;background:#323232;"></div>
<div style="left:458px;top:98px;width:886px;height:362px;background:#2b2b2b;"></div>
<div style="left:458px;top:98px;width:57px;height:362px;background:#313335;"></div>
<div style="left:1220px;top:98px;width:1px;height:362px;background:#464646;"></div>
<div style="left:515px;top:251px;width:829px;height:17px;background:#323232;"></div>
<div style="left:1335px;top:198px;width:8px;height:173px;background:#4a4a4a;box-shadow:inset 0 0 0 1px #535353"></div>
<div style="left:1334px;top:101px;width:3px;height:8px;background:#c8c8c8;"></div>
<div style="left:1338px;top:101px;width:3px;height:8px;background:#c8c8c8;"></div>
<div class="t" style="left:463.0px;top:98px;font-size:11.67px;color:#606366;font-family:'Liberation Mono', monospace;">11</div>
<div class="t" style="left:463.0px;top:115px;font-size:11.67px;color:#606366;font-family:'Liberation Mono', monospace;">12</div>
<div class="t" style="left:520.0px;top:115px;font-size:11.67px;color:#cc7832;font-family:'Liberation Mono', monospace;">public class </div>
<div class="t" style="left:611.0px;top:115px;font-size:11.67px;color:#a9b7c6;font-family:'Liberation Mono', monospace;">SearchActivity </div>
<div class="t" style="left:716.0px;top:115px;font-size:11.67px;color:#cc7832;font-family:'Liberation Mono', monospace;">extends </div>
<div class="t" style="left:772.0px;top:115px;font-size:11.67px;color:#a9b7c6;font-family:'Liberation Mono', monospace;">AppCompatActivity {</div>
<div class="t" style="left:463.0px;top:132px;font-size:11.67px;color:#606366;font-family:'Liberation Mono', monospace;">13</div>
<div class="t" style="left:463.0px;top:149px;font-size:11.67px;color:#606366;font-family:'Liberation Mono', monospace;">14</div>
<div class="t" style="left:520.0px;top:149px;font-size:11.67px;color:#cc7832;font-family:'Liberation Mono', monospace;">private  </div>
<div class="t" style="left:583.0px;top:149px;font-size:11.67px;color:#a9b7c6;font-family:'Liberation Mono', monospace;">EditText usernameEditText</div>
<div class="t" style="left:758.0px;top:149px;font-size:11.67px;color:#cc7832;font-family:'Liberation Mono', monospace;">;</div>
<div class="t" style="left:463.0px;top:166px;font-size:11.67px;color:#606366;font-family:'Liberation Mono', monospace;">15</div>
<div class="t" style="left:527.0px;top:166px;font-size:11.67px;color:#cc7832;font-family:'Liberation Mono', monospace;">private </div>
<div class="t" style="left:583.0px;top:166px;font-size:11.67px;color:#a9b7c6;font-family:'Liberation Mono', monospace;">Button button</div>
<div class="t" style="left:674.0px;top:166px;font-size:11.67px;color:#cc7832;font-family:'Liberation Mono', monospace;">;</div>
<div class="t" style="left:463.0px;top:183px;font-size:11.67px;color:#606366;font-family:'Liberation Mono', monospace;">16</div>
<div class="t" style="left:548.0px;top:183px;font-size:11.67px;color:#a9b7c6;font-family:'Liberation Mono', monospace;">@SuppressLint(</div>
<div class="t" style="left:646.0px;top:183px;font-size:11.67px;color:#6a8759;font-family:'Liberation Mono', monospace;">&quot;WrongViewCast&quot;</div>
<div class="t" style="left:751.0px;top:183px;font-size:11.67px;color:#a9b7c6;font-family:'Liberation Mono', monospace;">)</div>
<div class="t" style="left:463.0px;top:200px;font-size:11.67px;color:#606366;font-family:'Liberation Mono', monospace;">17</div>
<div class="t" style="left:548.0px;top:200px;font-size:11.67px;color:#a9b7c6;font-family:'Liberation Mono', monospace;">@Override</div>
<div class="t" style="left:463.0px;top:217px;font-size:11.67px;color:#606366;font-family:'Liberation Mono', monospace;">18</div>
<div class="t" style="left:548.0px;top:217px;font-size:11.67px;color:#cc7832;font-family:'Liberation Mono', monospace;">protected void </div>
<div class="t" style="left:653.0px;top:217px;font-size:11.67px;color:#a9b7c6;font-family:'Liberation Mono', monospace;">onCreate(Bundle savedInstanceState) {</div>
<div class="t" style="left:463.0px;top:234px;font-size:11.67px;color:#606366;font-family:'Liberation Mono', monospace;">19</div>
<div class="t" style="left:576.0px;top:234px;font-size:11.67px;color:#cc7832;font-family:'Liberation Mono', monospace;">super</div>
<div class="t" style="left:611.0px;top:234px;font-size:11.67px;color:#a9b7c6;font-family:'Liberation Mono', monospace;">.onCreate(savedInstanceState)</div>
<div class="t" style="left:814.0px;top:234px;font-size:11.67px;color:#cc7832;font-family:'Liberation Mono', monospace;">;</div>
<div class="t" style="left:463.0px;top:251px;font-size:11.67px;color:#a4a3a3;font-family:'Liberation Mono', monospace;">20</div>
<div class="t" style="left:576.0px;top:251px;font-size:11.67px;color:#a9b7c6;font-family:'Liberation Mono', monospace;">setContentView(R.layout.search)</div>
<div class="t" style="left:793.0px;top:251px;font-size:11.67px;color:#cc7832;font-family:'Liberation Mono', monospace;">;</div>
<div class="t" style="left:463.0px;top:268px;font-size:11.67px;color:#606366;font-family:'Liberation Mono', monospace;">21</div>
<div class="t" style="left:555.0px;top:268px;font-size:11.67px;color:#a9b7c6;font-family:'Liberation Mono', monospace;">usernameEditText = findViewById(R.id.editText)</div>
<div class="t" style="left:877.0px;top:268px;font-size:11.67px;color:#cc7832;font-family:'Liberation Mono', monospace;">;</div>
<div class="t" style="left:463.0px;top:285px;font-size:11.67px;color:#606366;font-family:'Liberation Mono', monospace;">22</div>
<div class="t" style="left:463.0px;top:302px;font-size:11.67px;color:#606366;font-family:'Liberation Mono', monospace;">23</div>
<div class="t" style="left:583.0px;top:302px;font-size:11.67px;color:#a9b7c6;font-family:'Liberation Mono', monospace;">button = findViewById(R.id.button)</div>
<div class="t" style="left:821.0px;top:302px;font-size:11.67px;color:#cc7832;font-family:'Liberation Mono', monospace;">;</div>
<div class="t" style="left:463.0px;top:319px;font-size:11.67px;color:#606366;font-family:'Liberation Mono', monospace;">24</div>
<div class="t" style="left:576.0px;top:319px;font-size:11.67px;color:#a9b7c6;font-family:'Liberation Mono', monospace;">button.setOnClickListener(</div>
<div class="t" style="left:758.0px;top:319px;font-size:11.67px;color:#cc7832;font-family:'Liberation Mono', monospace;">new </div>
<div class="t" style="left:786.0px;top:319px;font-size:11.67px;color:#a9b7c6;font-family:'Liberation Mono', monospace;">View.OnClickListener() {</div>
<div class="t" style="left:463.0px;top:336px;font-size:11.67px;color:#606366;font-family:'Liberation Mono', monospace;">25</div>
<div class="t" style="left:604.0px;top:336px;font-size:11.67px;color:#a9b7c6;font-family:'Liberation Mono', monospace;">@Override</div>
<div class="t" style="left:463.0px;top:353px;font-size:11.67px;color:#606366;font-family:'Liberation Mono', monospace;">26</div>
<div class="t" style="left:604.0px;top:353px;font-size:11.67px;color:#cc7832;font-family:'Liberation Mono', monospace;">public void </div>
<div class="t" style="left:688.0px;top:353px;font-size:11.67px;color:#a9b7c6;font-family:'Liberation Mono', monospace;">onClick(View v) {</div>
<div class="t" style="left:463.0px;top:370px;font-size:11.67px;color:#606366;font-family:'Liberation Mono', monospace;">27</div>
<div class="t" style="left:632.0px;top:370px;font-size:11.67px;color:#a9b7c6;font-family:'Liberation Mono', monospace;">String username = usernameEditText.getText().toString()</div>
<div class="t" style="left:1017.0px;top:370px;font-size:11.67px;color:#cc7832;font-family:'Liberation Mono', monospace;">;</div>
<div class="t" style="left:463.0px;top:387px;font-size:11.67px;color:#606366;font-family:'Liberation Mono', monospace;">28</div>
<div class="t" style="left:463.0px;top:404px;font-size:11.67px;color:#606366;font-family:'Liberation Mono', monospace;">29</div>
<div class="t" style="left:632.0px;top:404px;font-size:11.67px;color:#a9b7c6;font-family:'Liberation Mono', monospace;">Intent intent = </div>
<div class="t" style="left:744.0px;top:404px;font-size:11.67px;color:#cc7832;font-family:'Liberation Mono', monospace;">new </div>
<div class="t" style="left:772.0px;top:404px;font-size:11.67px;color:#a9b7c6;font-family:'Liberation Mono', monospace;">Intent(SearchActivity.</div>
<div class="t" style="left:926.0px;top:404px;font-size:11.67px;color:#cc7832;font-family:'Liberation Mono', monospace;">this</div>
<div class="t" style="left:954.0px;top:404px;font-size:11.67px;color:#cc7832;font-family:'Liberation Mono', monospace;">, </div>
<div class="t" style="left:968.0px;top:404px;font-size:11.67px;color:#a9b7c6;font-family:'Liberation Mono', monospace;">MainActivity.</div>
<div class="t" style="left:1059.0px;top:404px;font-size:11.67px;color:#cc7832;font-family:'Liberation Mono', monospace;">class</div>
<div class="t" style="left:1094.0px;top:404px;font-size:11.67px;color:#a9b7c6;font-family:'Liberation Mono', monospace;">)</div>
<div class="t" style="left:1101.0px;top:404px;font-size:11.67px;color:#cc7832;font-family:'Liberation Mono', monospace;">;</div>
<div class="t" style="left:463.0px;top:421px;font-size:11.67px;color:#606366;font-family:'Liberation Mono', monospace;">30</div>
<div class="t" style="left:632.0px;top:421px;font-size:11.67px;color:#a9b7c6;font-family:'Liberation Mono', monospace;">intent.putExtra(</div>
<div class="t" style="left:744.0px;top:421px;font-size:11.67px;color:#6a8759;font-family:'Liberation Mono', monospace;">&quot;USER_NAME&quot;</div>
<div class="t" style="left:821.0px;top:421px;font-size:11.67px;color:#cc7832;font-family:'Liberation Mono', monospace;">, </div>
<div class="t" style="left:835.0px;top:421px;font-size:11.67px;color:#a9b7c6;font-family:'Liberation Mono', monospace;">username)</div>
<div class="t" style="left:898.0px;top:421px;font-size:11.67px;color:#cc7832;font-family:'Liberation Mono', monospace;">;</div>
<div class="t" style="left:463.0px;top:438px;font-size:11.67px;color:#606366;font-family:'Liberation Mono', monospace;">31</div>
<div style="left:514px;top:98px;width:1px;height:362px;background:#555555;"></div>
<svg style="left:510px;top:187px" width="10" height="11" viewBox="0 0 10 11"><path d="M0.5 0.5 H9.5 V7 L5 10.5 L0.5 7 Z" fill="#2b2b2b" stroke="#6e6e6e"/><path d="M2.5 4.5 H7.5" stroke="#8a8a8a"/></svg>
<svg style="left:510px;top:204px" width="10" height="11" viewBox="0 0 10 11"><path d="M0.5 10.5 H9.5 V4 L5 0.5 L0.5 4 Z" fill="#2b2b2b" stroke="#6e6e6e"/><path d="M2.5 6.5 H7.5" stroke="#8a8a8a"/></svg>
<svg style="left:510px;top:221px" width="10" height="11" viewBox="0 0 10 11"><path d="M0.5 0.5 H9.5 V7 L5 10.5 L0.5 7 Z" fill="#2b2b2b" stroke="#6e6e6e"/><path d="M2.5 4.5 H7.5" stroke="#8a8a8a"/></svg>
<svg style="left:510px;top:323px" width="10" height="11" viewBox="0 0 10 11"><path d="M0.5 0.5 H9.5 V7 L5 10.5 L0.5 7 Z" fill="#2b2b2b" stroke="#6e6e6e"/><path d="M2.5 4.5 H7.5" stroke="#8a8a8a"/></svg>
<svg style="left:510px;top:357px" width="10" height="11" viewBox="0 0 10 11"><path d="M0.5 0.5 H9.5 V7 L5 10.5 L0.5 7 Z" fill="#2b2b2b" stroke="#6e6e6e"/><path d="M2.5 4.5 H7.5" stroke="#8a8a8a"/></svg>
<div style="left:652px;top:251px;width:2px;height:17px;background:#cfcfcf;"></div>
<div style="left:458px;top:460px;width:886px;height:24px;background:#323436;"></div>
<div style="left:458px;top:460px;width:886px;height:1px;background:#3b3d3e;"></div>
<div class="t" style="left:524px;top:463px;font-size:11.84px;color:#bbbbbb;">SearchActivity</div>
<svg style="left:611px;top:469px" width="4" height="8" viewBox="0 0 4 8"><path d="M0.5 0.5 L3.5 4 L0.5 7.5" fill="none" stroke="#6e6e6e"/></svg>
<div class="t" style="left:623px;top:463px;font-size:11.72px;color:#bbbbbb;">onCreate()</div>
<div style="left:22px;top:484px;width:1322px;height:24px;background:#3c3f41;"></div>
<div style="left:22px;top:508px;width:1322px;height:1px;background:#323232;"></div>
<div class="t" style="left:29px;top:487px;font-size:12px;color:#bbbbbb;">Build:</div>
<div style="left:67px;top:484px;width:62px;height:24px;background:#35383a;"></div>
<div class="t" style="left:78px;top:487px;font-size:11.47px;color:#bbbbbb;">Sync</div>
<svg style="left:110px;top:493px" width="9" height="9" viewBox="0 0 9 9"><path d="M0.5 0.5 L8.5 8.5 M8.5 0.5 L0.5 8.5" stroke="#7a7a7a" stroke-width="1"/></svg>
<svg style="left:1298px;top:490px" width="13" height="13" viewBox="0 0 13 13"><path d="M6.5 0 L7.8 2 L10 1.3 L10.4 3.6 L12.7 4.3 L11.5 6.5 L12.7 8.7 L10.4 9.4 L10 11.7 L7.8 11 L6.5 13 L5.2 11 L3 11.7 L2.6 9.4 L0.3 8.7 L1.5 6.5 L0.3 4.3 L2.6 3.6 L3 1.3 L5.2 2 Z" fill="#afb1b3"/><circle cx="6.5" cy="6.5" r="2.2" fill="#3c3f41"/></svg>
<div style="left:1324px;top:495px;width:12px;height:2px;background:#afb1b3;"></div>
<div style="left:22px;top:509px;width:1322px;height:175px;background:#3c3f41;"></div>
<div style="left:50px;top:509px;width:1px;height:175px;background:#323232;"></div>
<svg style="left:29px;top:518px" width="15" height="14" viewBox="0 0 15 14"><rect x="0" y="0" width="10" height="9" fill="#afb1b3"/><rect x="3" y="3" width="12" height="11" fill="#3c3f41"/><rect x="4" y="4" width="10" height="9.5" fill="#afb1b3"/><path d="M7.3 6.3 L9.8 8.6 L7.3 10.9" fill="none" stroke="#2b2b2b" stroke-width="1.3"/></svg>
<div style="left:26px;top:540px;width:20px;height:1px;background:#515151;"></div>
<svg style="left:29px;top:550px" width="14" height="13" viewBox="0 0 14 13"><path d="M8 0 L14 6 L12 7 L9 7 L6 10 L6 12 L5 12 L1 8 L1 7 L3 7 L6 4 L6 1.5 Z" fill="#afb1b3"/><path d="M3 10 L0 13" stroke="#afb1b3" stroke-width="1.5"/></svg>
<svg style="left:54px;top:514px" width="9" height="8" viewBox="0 0 9 8"><path d="M0 0 H9 L4.5 7.5 Z" fill="#afb1b3"/></svg>
<svg style="left:72px;top:512px" width="13" height="11" viewBox="0 0 13 11"><path d="M1 5.5 L4.8 9 L12 1.5" fill="none" stroke="#499c54" stroke-width="2.3"/></svg>
<div class="t" style="left:90px;top:508px;font-size:11.62px;color:#bbbbbb;font-weight:bold;">GithubApi-master:</div>
<div class="t" style="left:196px;top:508px;font-size:11.6px;color:#bbbbbb;">synced successfully</div>
<div class="t" style="left:302px;top:508px;font-size:11.4px;color:#8c8c8c;">at 9/24/2019 3:21 PM</div>
<svg style="left:91px;top:528px" width="13" height="11" viewBox="0 0 13 11"><path d="M1 5.5 L4.8 9 L12 1.5" fill="none" stroke="#499c54" stroke-width="2.3"/></svg>
<div class="t" style="left:108px;top:524px;font-size:11.6px;color:#bbbbbb;">Starting Gradle Daemon</div>
<svg style="left:72px;top:546px" width="9" height="8" viewBox="0 0 9 8"><path d="M0 0 H9 L4.5 7.5 Z" fill="#afb1b3"/></svg>
<svg style="left:91px;top:544px" width="13" height="11" viewBox="0 0 13 11"><path d="M1 5.5 L4.8 9 L12 1.5" fill="none" stroke="#499c54" stroke-width="2.3"/></svg>
<div class="t" style="left:108px;top:540px;font-size:12px;color:#bbbbbb;">Run build</div>
<div class="t" style="left:162px;top:540px;font-size:12px;color:#8c8c8c;">C:\Users\Edgar\Desktop\GithubApi-master</div>
<svg style="left:91px;top:561px" width="8" height="10" viewBox="0 0 8 10"><path d="M0 0.5 L7.5 5 L0 9.5 Z" fill="#afb1b3"/></svg>
<svg style="left:109px;top:560px" width="13" height="11" viewBox="0 0 13 11"><path d="M1 5.5 L4.8 9 L12 1.5" fill="none" stroke="#499c54" stroke-width="2.3"/></svg>
<div class="t" style="left:126px;top:556px;font-size:12px;color:#bbbbbb;">Load build</div>
<svg style="left:91px;top:577px" width="8" height="10" viewBox="0 0 8 10"><path d="M0 0.5 L7.5 5 L0 9.5 Z" fill="#afb1b3"/></svg>
<svg style="left:109px;top:576px" width="13" height="11" viewBox="0 0 13 11"><path d="M1 5.5 L4.8 9 L12 1.5" fill="none" stroke="#499c54" stroke-width="2.3"/></svg>
<div class="t" style="left:126px;top:572px;font-size:12px;color:#bbbbbb;">Configure build</div>
<svg style="left:109px;top:592px" width="13" height="11" viewBox="0 0 13 11"><path d="M1 5.5 L4.8 9 L12 1.5" fill="none" stroke="#499c54" stroke-width="2.3"/></svg>
<div class="t" style="left:126px;top:588px;font-size:11.7px;color:#bbbbbb;">Calculate task graph</div>
<svg style="left:91px;top:609px" width="8" height="10" viewBox="0 0 8 10"><path d="M0 0.5 L7.5 5 L0 9.5 Z" fill="#afb1b3"/></svg>
<svg style="left:109px;top:608px" width="13" height="11" viewBox="0 0 13 11"><path d="M1 5.5 L4.8 9 L12 1.5" fill="none" stroke="#499c54" stroke-width="2.3"/></svg>
<div class="t" style="left:126px;top:604px;font-size:12px;color:#bbbbbb;">Run tasks</div>
<div class="t" style="left:1141px;top:508px;width:200px;text-align:right;font-size:11.3px;color:#8c8c8c">2 m 4 s 955 ms</div>
<div class="t" style="left:1141px;top:524px;width:200px;text-align:right;font-size:11.3px;color:#8c8c8c">10 s 13 ms</div>
<div class="t" style="left:1141px;top:540px;width:200px;text-align:right;font-size:11.3px;color:#8c8c8c">1 m 19 s 854 ms</div>
<div class="t" style="left:1141px;top:556px;width:200px;text-align:right;font-size:11.3px;color:#8c8c8c">9 s 113 ms</div>
<div class="t" style="left:1141px;top:572px;width:200px;text-align:right;font-size:11.3px;color:#8c8c8c">56 s 287 ms</div>
<div class="t" style="left:1141px;top:588px;width:200px;text-align:right;font-size:11.3px;color:#8c8c8c">2 s 684 ms</div>
<div class="t" style="left:1141px;top:604px;width:200px;text-align:right;font-size:11.3px;color:#8c8c8c">10 s 752 ms</div>
<div style="left:0px;top:684px;width:1366px;height:1px;background:#4a4c4e;"></div>
<div style="left:0px;top:685px;width:1366px;height:21px;background:#3c3f41;"></div>
<svg style="left:33px;top:692px" width="11" height="10" viewBox="0 0 11 10"><path d="M0 1 H10.5 M0 4.8 H7 M0 8.6 H9" stroke="#afb1b3" stroke-width="1.8"/></svg>
<div class="t" style="left:49px;top:687px;font-size:11.4px;color:#bbbbbb;"><u>6</u>: Logcat</div>
<svg style="left:117px;top:692px" width="11" height="10" viewBox="0 0 11 10"><path d="M0 1 H2 M0 4.8 H2 M0 8.6 H2 M3.5 1 H11 M3.5 4.8 H11 M3.5 8.6 H11" stroke="#afb1b3" stroke-width="1.7"/></svg>
<div class="t" style="left:131px;top:687px;font-size:11.6px;color:#bbbbbb;">TODO</div>
<svg style="left:185px;top:691px" width="11" height="10" viewBox="0 0 11 10"><rect x="0" y="0" width="11" height="10" fill="#afb1b3"/><path d="M1.8 2.5 L4.3 4.5 L1.8 6.5 M5 8 H9" fill="none" stroke="#3c3f41" stroke-width="1"/></svg>
<div class="t" style="left:201px;top:687px;font-size:11.6px;color:#bbbbbb;">Terminal</div>
<svg style="left:268px;top:690px" width="12" height="13" viewBox="0 0 12 13"><path d="M2 12.5 V1.5 H6 M0 3.5 L2 1 L4 3.5" fill="none" stroke="#afb1b3" stroke-width="1.5"/><path d="M2 7.5 H8 V2.5 M6 4.5 L8 2 L10 4.5" fill="none" stroke="#afb1b3" stroke-width="1.5"/></svg>
<div class="t" style="left:285px;top:687px;font-size:11.5px;color:#bbbbbb;"><u>9</u>: Version Control</div>
<div style="left:391px;top:685px;width:62px;height:21px;background:#2d2f30;"></div>
<svg style="left:401px;top:689px" width="14" height="14" viewBox="0 0 14 14"><path d="M1.5 6 L8 1.5" stroke="#afb1b3" stroke-width="3"/><path d="M5.5 3.8 L12.5 12" stroke="#afb1b3" stroke-width="2.6"/></svg>
<div class="t" style="left:418px;top:687px;font-size:11.7px;color:#e8e8e8;">Build</div>
<svg style="left:1267px;top:690px" width="13" height="13" viewBox="0 0 13 13"><circle cx="6.5" cy="6.5" r="6.3" fill="#499c54"/></svg>
<div class="t" style="left:1270.5px;top:687px;font-size:9px;color:#ffffff;font-weight:bold;">1</div>
<div class="t" style="left:1284px;top:687px;font-size:11.3px;color:#bbbbbb;">Event Log</div>
<div style="left:0px;top:706px;width:1366px;height:1px;background:#4a4c4e;"></div>
<div style="left:0px;top:707px;width:1366px;height:21px;background:#3c3f41;"></div>
<svg style="left:10px;top:712px" width="12" height="12" viewBox="0 0 12 12"><rect x="2.5" y="0.5" width="9" height="9" fill="none" stroke="#afb1b3"/><path d="M0.5 2.5 V11.5 H9.5" fill="none" stroke="#afb1b3"/></svg>
<div class="t" style="left:31px;top:708px;font-size:11.76px;color:#bbbbbb;">NDK Resolution Outcome: Project settings: Gradle model version=5.4.1, NDK versio... (moments ago)</div>
<svg style="left:566px;top:710px" width="15" height="15" viewBox="0 0 15 15"><g stroke="#8a8a8a" stroke-width="1.5"><path d="M7.5 0.5 V4"/><path d="M7.5 11 V14.5"/><path d="M0.5 7.5 H4"/><path d="M11 7.5 H14.5"/><path d="M2.5 2.5 L5 5"/><path d="M10 10 L12.5 12.5"/><path d="M12.5 2.5 L10 5"/><path d="M5 10 L2.5 12.5"/></g></svg>
<div class="t" style="left:583px;top:708px;font-size:12px;color:#bbbbbb;">Indexing...</div>
<div style="left:934px;top:716px;width:147px;height:4px;background:#555759;border-radius:2px"></div>
<div style="left:934px;top:715px;width:6px;height:6px;background:#d0d0d0;border-radius:3px"></div>
<div style="left:1088px;top:711px;width:3px;height:13px;background:#6e6e6e;"></div>
<div style="left:1093px;top:711px;width:3px;height:13px;background:#6e6e6e;"></div>
<div class="t" style="left:1109px;top:708px;font-size:11.3px;color:#bbbbbb;">20:20</div>
<div class="t" style="left:1147px;top:708px;font-size:11.3px;color:#bbbbbb;">LF</div>
<svg style="left:1164px;top:712px" width="6" height="11" viewBox="0 0 6 11"><path d="M0 4.5 L3 1 L6 4.5 Z M0 6.5 L3 10 L6 6.5 Z" fill="#afb1b3"/></svg>
<div class="t" style="left:1180px;top:708px;font-size:11.3px;color:#bbbbbb;">UTF-8</div>
<svg style="left:1216px;top:712px" width="6" height="11" viewBox="0 0 6 11"><path d="M0 4.5 L3 1 L6 4.5 Z M0 6.5 L3 10 L6 6.5 Z" fill="#afb1b3"/></svg>
<div class="t" style="left:1231px;top:708px;font-size:11.3px;color:#bbbbbb;">4 spaces</div>
<svg style="left:1281px;top:712px" width="6" height="11" viewBox="0 0 6 11"><path d="M0 4.5 L3 1 L6 4.5 Z M0 6.5 L3 10 L6 6.5 Z" fill="#afb1b3"/></svg>
<svg style="left:1304px;top:712px" width="6" height="11" viewBox="0 0 6 11"><path d="M0 4.5 L3 1 L6 4.5 Z M0 6.5 L3 10 L6 6.5 Z" fill="#afb1b3"/></svg>
<svg style="left:1320px;top:710px" width="14" height="14" viewBox="0 0 14 14"><path d="M2.5 7 V4 A2.8 2.8 0 0 1 8 4 V5" fill="none" stroke="#afb1b3" stroke-width="1.6"/><rect x="4" y="7" width="9" height="7" fill="#afb1b3"/></svg>
<svg style="left:1346px;top:710px" width="13" height="14" viewBox="0 0 13 14"><path d="M2.5 5 L3.5 0.5 H9.5 L10.5 5 Z" fill="#afb1b3"/><rect x="0" y="5" width="13" height="1.5" fill="#afb1b3"/><path d="M3 8 H10 V10 C10 13 3 13 3 10 Z" fill="#afb1b3"/><path d="M4 9 H6 M7 9 H9" stroke="#3c3f41"/></svg>
<div style="left:0px;top:728px;width:1366px;height:40px;background:#1f3142;background:linear-gradient(90deg,#233b46 0%,#21363f 30%,#1f3142 65%,#1b2a47 90%,#1b2848 100%)"></div>
<svg style="left:16px;top:740px" width="16" height="16" viewBox="0 0 16 16"><path d="M0 2.2 L6.2 1.3 V7.1 H0 Z M7.3 1.2 L16 0 V7.1 H7.3 Z M0 8.2 H6.2 V14.7 L0 13.8 Z M7.3 8.2 H16 V16 L7.3 14.8 Z" fill="#ffffff"/></svg>
<div style="left:48px;top:728px;width:344px;height:40px;background:#f2f2f2;box-shadow:inset 1px 1px 0 #c8c8c8"></div>
<svg style="left:59px;top:739px" width="18" height="18" viewBox="0 0 18 18"><circle cx="11.2" cy="6.8" r="5.2" fill="none" stroke="#111" stroke-width="1.2"/><path d="M7.5 10.6 L1.3 16.8" stroke="#111" stroke-width="1.3"/></svg>
<div class="t" style="left:88px;top:739px;font-size:14.5px;color:#1a1a1a;">Type here to search</div>
<svg style="left:407px;top:739px" width="18" height="17" viewBox="0 0 18 17"><rect x="2.5" y="3.5" width="10" height="9" fill="none" stroke="#fff" stroke-width="1.3"/><path d="M0 1 H15 M0 15.5 H15" stroke="#fff" stroke-width="1.3"/><rect x="14.5" y="4" width="2.5" height="3" fill="#fff"/><rect x="15" y="8.5" width="1.5" height="4" fill="#fff"/></svg>
<svg style="left:457px;top:737px" width="21" height="21" viewBox="0 0 21 21"><path d="M2 12 C2 4 8 0 13 0.5 C18 1 21 5 21 10 V12 H7 C7 16 11 18 14 18 C17 18 19 17 20 16 V20 C18 21 15 21.5 13 21.3 C6 21 2 17 2 12 Z M7.5 8.5 H15.5 C15.5 5.5 13.5 4 11.5 4 C9.5 4 8 5.5 7.5 8.5 Z" fill="#1e7ee0"/></svg>
<div style="left:447px;top:766px;width:40px;height:2px;background:#76b9ed;"></div>
<svg style="left:505px;top:738px" width="22" height="19" viewBox="0 0 22 19"><path d="M0 1 H8 L10 3 H22 V19 H0 Z" fill="#e8b33b"/><rect x="0" y="6" width="22" height="13" fill="#f8d26e"/><path d="M6 19 V12 H16 V19 H13.5 V14.5 H8.5 V19 Z" fill="#2d8bd6"/></svg>
<div style="left:496px;top:766px;width:40px;height:2px;background:#76b9ed;"></div>
<svg style="left:553px;top:735px" width="24" height="24" viewBox="0 0 24 24"><path d="M8 6 V4 A4 4 0 0 1 16 4 V6" fill="none" stroke="#fff" stroke-width="1.5"/><rect x="0" y="6" width="24" height="18" rx="1.5" fill="#fff"/><rect x="7" y="10" width="4.5" height="4.5" fill="#f25022"/><rect x="12.5" y="10" width="4.5" height="4.5" fill="#7fba00"/><rect x="7" y="15.5" width="4.5" height="4.5" fill="#00a4ef"/><rect x="12.5" y="15.5" width="4.5" height="4.5" fill="#ffb900"/></svg>
<svg style="left:600px;top:737px" width="26" height="20" viewBox="0 0 26 20"><path d="M1 6 L13 0 L25 6 V19 H1 Z" fill="#fff"/><path d="M1 6.5 L13 13 L25 6.5" fill="none" stroke="#1c2d3a" stroke-width="1.2"/></svg>
<svg style="left:617px;top:747px" width="19" height="17" viewBox="0 0 19 17"><circle cx="9.5" cy="8.5" r="8.3" fill="#333"/><circle cx="9.5" cy="8.5" r="8.3" fill="none" stroke="#777" stroke-width="1"/></svg>
<div class="t" style="left:620.5px;top:745px;font-size:11px;color:#ffffff;font-weight:bold;">31</div>
<div style="left:594px;top:766px;width:40px;height:2px;background:#76b9ed;"></div>
<svg style="left:651px;top:736px" width="24" height="24" viewBox="0 0 24 24"><defs><linearGradient id="ffo" x1="0" y1="1" x2="1" y2="0"><stop offset="0" stop-color="#c8157f"/><stop offset="0.3" stop-color="#ff2d3a"/><stop offset="0.6" stop-color="#ff8a00"/><stop offset="0.85" stop-color="#ffd21f"/><stop offset="1" stop-color="#fff04a"/></linearGradient><linearGradient id="ffb" x1="0" y1="0" x2="0.3" y2="1"><stop offset="0" stop-color="#1f9cf0"/><stop offset="1" stop-color="#3325a8"/></linearGradient></defs><circle cx="12" cy="12.5" r="11" fill="url(#ffo)"/><circle cx="12.5" cy="11" r="6.5" fill="url(#ffb)"/><path d="M3 6 L5 3.5 C6 5 7.5 5.5 9.5 5.5 C8.5 7 7 8 7.5 10 C8 12.5 11 13 13 12 C12 14 9.5 15.5 7 14.5 C4 13 2.5 9 3 6 Z" fill="#ff6a00"/><path d="M13.5 2 C16.5 3 19 6 19 10 C19 14 16 17.5 12 17.5 C15 16 17 13.5 16.5 10 C16 7 14.5 5 13.5 2 Z" fill="#ffdd33"/></svg>
<div style="left:643px;top:766px;width:40px;height:2px;background:#76b9ed;"></div>
<svg style="left:700px;top:737px" width="23" height="23" viewBox="0 0 23 23"><circle cx="11.5" cy="11.5" r="11.3" fill="#2ca5e0"/><path d="M5 11 L17 6 L15 17 L11 14 L9 16 V13 L15 8 L8 12.5 Z" fill="#fff"/></svg>
<div style="left:709px;top:750px;width:18px;height:13px;background:#e53935;border-radius:2px"></div>
<div class="t" style="left:710px;top:748px;font-size:10px;color:#ffffff;">211</div>
<div style="left:692px;top:766px;width:40px;height:2px;background:#76b9ed;"></div>
<svg style="left:748px;top:735px" width="25" height="25" viewBox="0 0 25 25"><g transform="rotate(45 12.5 12.5)"><rect x="3" y="3" width="9" height="9" fill="#f05133" opacity="0.9"/><rect x="13" y="3" width="9" height="9" fill="#5fb359"/><rect x="3" y="13" width="9" height="9" fill="#4a90e2"/><rect x="13" y="13" width="9" height="9" fill="#f6d44b"/></g><path d="M10 3 V20 M10 12 L16 18" stroke="#333" stroke-width="1.8"/><circle cx="10" cy="20" r="2" fill="#333"/><circle cx="16" cy="18" r="2" fill="#333"/></svg>
<div style="left:741px;top:766px;width:40px;height:2px;background:#76b9ed;"></div>
<svg style="left:799px;top:739px" width="22" height="19" viewBox="0 0 22 19"><rect x="0" y="0" width="22" height="17" rx="2" fill="#3ddc84"/><rect x="6.5" y="3" width="9" height="16" fill="#d7ecf6" stroke="#1a2a3a" stroke-width="1.5"/></svg>
<div style="left:790px;top:766px;width:40px;height:2px;background:#76b9ed;"></div>
<div style="left:835px;top:728px;width:48px;height:40px;background:#4a5662;"></div>
<svg style="left:848px;top:736px" width="22" height="23" viewBox="0 0 22 23"><circle cx="11" cy="10.5" r="10" fill="#78b543"/><path d="M11 4.5 L12.8 8.5 L11 12 L9.2 8.5 Z" fill="none" stroke="#666" stroke-width="1.5"/><circle cx="11" cy="8.5" r="1" fill="#78b543"/><path d="M10 11.5 L3.8 22 M12 11.5 L18.2 22" stroke="#eeeeee" stroke-width="1.9"/><path d="M6.2 16 Q11 19 15.8 16" fill="none" stroke="#eeeeee" stroke-width="1.6"/></svg>
<div style="left:835px;top:766px;width:48px;height:2px;background:#76b9ed;"></div>
<svg style="left:1123px;top:744px" width="13" height="8" viewBox="0 0 13 8"><path d="M0.7 7.3 L6.5 1 L12.3 7.3" fill="none" stroke="#fff" stroke-width="1.2"/></svg>
<svg style="left:1144px;top:742px" width="18" height="11" viewBox="0 0 18 11"><rect x="5.5" y="2.5" width="11" height="7" fill="none" stroke="#fff" stroke-width="1.1"/><rect x="7" y="4" width="8" height="4" fill="#fff"/><rect x="16.5" y="4.5" width="1.5" height="3" fill="#fff"/><path d="M1 1 V3.5 M3 1 V3.5 M0 3.5 H4 V5 L2 7 V10" fill="none" stroke="#fff" stroke-width="1"/></svg>
<svg style="left:1172px;top:742px" width="14" height="14" viewBox="0 0 14 14"><path d="M1 13 A12 12 0 0 1 13 1 M3.5 13 A9.5 9.5 0 0 1 13 3.5 M6 13 A7 7 0 0 1 13 6 M8.5 13 A4.5 4.5 0 0 1 13 8.5" fill="none" stroke="#9aa3ad" stroke-width="1"/><circle cx="11.5" cy="11.5" r="1.6" fill="#fff"/></svg>
<svg style="left:1192px;top:743px" width="16" height="11" viewBox="0 0 16 11"><path d="M0.5 3.5 H3 L6.5 0.5 V10.5 L3 7.5 H0.5 Z" fill="none" stroke="#fff" stroke-width="1"/><path d="M9.5 3 L14.5 8 M14.5 3 L9.5 8" stroke="#fff" stroke-width="1.1"/></svg>
<div class="t" style="left:1219px;top:730px;font-size:11.7px;color:#ffffff;">ENG</div>
<div class="t" style="left:1224px;top:747px;font-size:12px;color:#ffffff;">SV</div>
<div class="t" style="left:1260px;top:730px;font-size:11.9px;color:#ffffff;">3:21 PM</div>
<div class="t" style="left:1255px;top:747px;font-size:12px;color:#ffffff;">9/24/2019</div>
<svg style="left:1325px;top:740px" width="16" height="13" viewBox="0 0 16 13"><path d="M0 0 H16 V10 H6 L3 13 V10 H0 Z" fill="#fff"/><path d="M3 3.5 H13 M3 6.5 H13 M3 9.5 H13" stroke="#1b2848" stroke-width="1"/></svg>
<svg style="left:1331px;top:747px" width="19" height="17" viewBox="0 0 19 17"><circle cx="9.5" cy="8.5" r="8.4" fill="#2e3035"/><circle cx="9.5" cy="8.5" r="8.4" fill="none" stroke="#8a8d95" stroke-width="1"/></svg>
<div class="t" style="left:1334px;top:746px;font-size:11px;color:#ffffff;font-weight:bold;">21</div>
<div style="left:1361px;top:728px;width:1px;height:40px;background:#6a7590;"></div>
</body></html>
